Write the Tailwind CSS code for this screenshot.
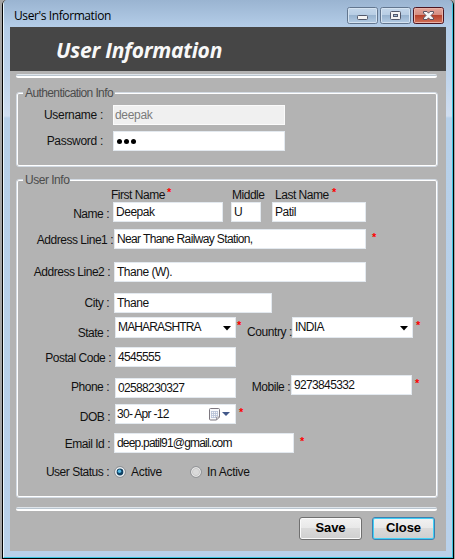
<!DOCTYPE html>
<html lang="en">
<head>
<meta charset="utf-8">
<title>User's Information</title>
<script src="https://cdn.jsdelivr.net/npm/@tailwindcss/browser@4"></script>
</head>
<body class="w-[455px] h-[559px] overflow-hidden bg-[#a5a5a5] pl-[2px] pr-px font-['Liberation_Sans',Arial,sans-serif] text-[12px] leading-[14px] tracking-[-0.48px] text-[#111]">
<div class="h-[559px] border-x border-b border-black rounded-t-[5px] overflow-hidden">
<div class="h-[558px] border-l border-r border-b border-l-[#e9f6fd] border-r-[#3cc4e0] border-b-[#3cc4e0] bg-[linear-gradient(180deg,#9ab4d1_0,#b4cde8_27px,#bdd3eb_70px,#d0def0_116px,#b7d0e9_118px,#b9d1ea_100%)] pl-[6px] pr-[6px]">
  <header class="h-[27px] flex items-start justify-between">
    <h1 class="pl-[4px] pt-[8px] font-['Open_Sans',sans-serif] text-[12px] leading-[16px] tracking-[-0.4px] text-black">User's Information</h1>
    <div class="flex gap-[2px] pt-[7px] pr-[2px]">
      <svg width="31" height="17" viewBox="0 0 31 17"><defs><linearGradient id="b" x2="0" y2="1"><stop offset="0" stop-color="#c5d8eb"/><stop offset=".48" stop-color="#b7cde4"/><stop offset=".5" stop-color="#98b3cf"/><stop offset="1" stop-color="#b5cde5"/></linearGradient><linearGradient id="r" x2="0" y2="1"><stop offset="0" stop-color="#e5a89d"/><stop offset=".47" stop-color="#d48c80"/><stop offset=".5" stop-color="#b7422c"/><stop offset="1" stop-color="#d3745b"/></linearGradient></defs><rect x=".5" y=".5" width="30" height="16" rx="2" fill="url(#b)" stroke="#62768f"/><rect x="1.5" y="1.5" width="28" height="14" rx="1" fill="none" stroke="#d5e3f1"/><rect x="10.500" y="8.500" width="10" height="4" rx="1" fill="#f4f4f4" stroke="#53596b"/></svg>
      <svg width="31" height="17" viewBox="0 0 31 17"><rect x=".5" y=".5" width="30" height="16" rx="2" fill="url(#b)" stroke="#62768f"/><rect x="1.5" y="1.5" width="28" height="14" rx="1" fill="none" stroke="#d5e3f1"/><rect x="10.500" y="4.500" width="10" height="8" rx="1" fill="#f4f4f4" stroke="#53596b"/><rect x="13.500" y="7.500" width="4" height="2" fill="#9fb9d6" stroke="#53596b"/></svg>
      <svg width="31" height="17" viewBox="0 0 31 17"><rect x=".5" y=".5" width="30" height="16" rx="2" fill="url(#r)" stroke="#4b1521"/><rect x="1.500" y="1.500" width="28" height="14" rx="1" fill="none" stroke="#e9b2a7"/><path d="M10.500 4.500h3.500l1.500 1.700 1.500-1.700h3.500v1.500l-2.500 2.500 2.500 2.500v1.500h-3.500l-1.500-1.700-1.500 1.700h-3.500v-1.500l2.500-2.500-2.500-2.500z" fill="#f6f6f6" stroke="#5b5361"/></svg>
    </div>
  </header>
  <main class="h-[524px] bg-[#b3b3b3]">
    <div class="h-[44px] bg-[#464646] pl-[46px] pt-[9px] font-['Open_Sans',sans-serif] font-bold italic text-[21px] leading-[28px] tracking-[-0.25px] text-[#f8f8f8]"><h2>User Information</h2></div>
    <div class="mt-[3px] ml-[6px] mr-[9px] h-[4px] border-t border-b-2 border-t-[#dfe5eb] border-b-white bg-[#b9c5cf] rounded-[2px]"></div>

    <section class="relative mt-[14px] ml-[6px] mr-[8px] h-[75px] rounded-[3px] border border-[#d3dbe4]">
      <div class="h-[73px] rounded-[2px] border border-white pt-[11px]">
        <div class="flex h-[26px]">
          <label class="w-[85px] pt-[3px] text-right tracking-[-0.3px]">Username :</label>
          <div class="ml-[10px] w-[172px] h-[20px] bg-[#f0f0f0] border border-[#fbfbfb] px-px pt-[2px] text-[#7b7b7b] tracking-[-0.3px]">deepak</div>
        </div>
        <div class="flex">
          <label class="w-[85px] pt-[3px] text-right tracking-[-0.3px]">Password :</label>
          <div class="ml-[10px] w-[172px] h-[20px] bg-white border border-[#e3e9ef] pl-[3px] pt-[7px] flex gap-[2px]"><i class="size-[5px] rounded-full bg-black"></i><i class="size-[5px] rounded-full bg-black"></i><i class="size-[5px] rounded-full bg-black"></i></div>
        </div>
      </div>
      <h3 class="absolute left-[6px] top-[-7px] w-[92px] pl-[2px] bg-[#b3b3b3] text-[#4c4c4c] whitespace-nowrap tracking-[-0.6px]">Authentication Info</h3>
    </section>

    <section class="relative mt-[12px] ml-[6px] mr-[8px] h-[319px] rounded-[3px] border border-[#d3dbe4]">
      <div class="h-[317px] rounded-[2px] border border-white pt-[7px]">
        <div class="flex h-[14px] pl-[93px]">
          <span class="w-[56px]">First Name</span><span class="w-[65px] -mt-[3px] text-[#f00] text-[11px] font-bold">*</span><span class="w-[43px]">Middle</span><span class="w-[57px]">Last Name</span><span class="-mt-[3px] text-[#f00] text-[11px] font-bold">*</span>
        </div>
        <div class="flex h-[27px]">
          <label class="w-[91px] pt-[5px] text-right">Name :</label>
          <div class="ml-[4px] w-[110px] h-[20px] bg-white border border-[#e3e9ef] pl-[2px] pt-[2px]">Deepak</div>
          <div class="ml-[8px] w-[30px] h-[20px] bg-white border border-[#e3e9ef] pl-[2px] pt-[2px]">U</div>
          <div class="ml-[11px] w-[94px] h-[20px] bg-white border border-[#e3e9ef] pl-[2px] pt-[2px]">Patil</div>
        </div>
        <div class="flex h-[33px]">
          <label class="w-[95px] pt-[4px] text-right">Address Line1 :</label>
          <div class="ml-px w-[252px] h-[20px] bg-white border border-[#e3e9ef] pl-[2px] pt-[2px] tracking-[-0.63px]">Near Thane Railway Station,</div>
          <span class="ml-[6px] pt-px text-[#f00] text-[11px] font-bold">*</span>
        </div>
        <div class="flex h-[31px]">
          <label class="w-[92px] pt-[3px] text-right">Address Line2 :</label>
          <div class="ml-[4px] w-[252px] h-[20px] bg-white border border-[#e3e9ef] pl-[2px] pt-[2px]">Thane (W).</div>
        </div>
        <div class="flex h-[24px]">
          <label class="w-[91px] pt-[3px] text-right">City :</label>
          <div class="ml-[5px] w-[158px] h-[20px] bg-white border border-[#e3e9ef] pl-[2px] pt-[2px]">Thane</div>
        </div>
        <div class="flex h-[30px]">
          <label class="w-[91px] pt-[9px] text-right">State :</label>
          <div class="ml-[6px] w-[121px] h-[21px] bg-white border border-[#e3e9ef] pl-[2px] pr-[4px] pt-[2px] flex justify-between"><span class="tracking-[-0.85px]">MAHARASHTRA</span><svg class="mt-[6px]" width="8" height="5"><path d="M0 0h8L4 4.500z"/></svg></div>
          <span class="w-[56px] pl-px flex"><span class="w-[4px] pt-px text-[#f00] text-[11px] font-bold">*</span><label class="pl-[6px] pt-[8px] whitespace-nowrap tracking-[-0.4px]">Country :</label></span>
          <div class="w-[121px] h-[21px] bg-white border border-[#e3e9ef] pl-[2px] pr-[4px] pt-[2px] flex justify-between"><span class="tracking-[-0.6px]">INDIA</span><svg class="mt-[6px]" width="8" height="5"><path d="M0 0h8L4 4.500z"/></svg></div>
          <span class="pl-[3px] pt-px text-[#f00] text-[11px] font-bold">*</span>
        </div>
        <div class="flex h-[28px]">
          <label class="w-[93px] pt-[4px] text-right">Postal Code :</label>
          <div class="ml-[4px] w-[121px] h-[20px] bg-white border border-[#e3e9ef] pl-[2px] pt-[2px] tracking-[-0.65px]">4545555</div>
        </div>
        <div class="flex h-[29px]">
          <label class="w-[91px] pt-[5px] text-right">Phone :</label>
          <div class="ml-[6px] mt-[3px] w-[121px] h-[20px] bg-white border border-[#e3e9ef] pl-[2px] pt-[2px] tracking-[-0.65px]">02588230327</div>
          <label class="w-[54px] pt-[5px] text-right">Mobile :</label>
          <div class="ml-px w-[121px] h-[20px] bg-white border border-[#e3e9ef] pl-[2px] pt-[2px] tracking-[-0.65px]">9273845332</div>
          <span class="pl-[3px] pt-px text-[#f00] text-[11px] font-bold">*</span>
        </div>
        <div class="flex h-[29px]">
          <label class="w-[92px] pt-[6px] text-right">DOB :</label>
          <div class="ml-[5px] w-[121px] h-[20px] bg-white border border-[#e3e9ef] pl-px pr-[5px] pt-[2px] flex justify-between"><span class="tracking-[-0.7px]">30- Apr -12</span>
            <svg class="mt-px" width="21" height="13" viewBox="0 0 21 13"><path d="M1.500.5h8a1 1 0 0 1 1 1v7.500l-3 3h-6a1 1 0 0 1-1-1v-9.500a1 1 0 0 1 1-1z" fill="#f8f8fb" stroke="#7d7880"/><path d="M7.500 12v-3h3" fill="none" stroke="#8d8a94" stroke-width=".8"/><path d="M2 3.500h7M2 5.500h7M2 7.500h7M2 9.500h5M2.500 3v7M4.500 3v7M6.500 3v7M8.500 3v5" stroke="#b5bfd6" stroke-width=".8"/><path d="M13 4h8l-4 4z" fill="#42598a"/></svg></div>
          <span class="pl-[3px] pt-px text-[#f00] text-[11px] font-bold">*</span>
        </div>
        <div class="flex h-[31px]">
          <label class="w-[92px] pt-[4px] text-right">Email Id :</label>
          <div class="ml-[4px] w-[180px] h-[20px] bg-white border border-[#e3e9ef] pl-[2px] pt-[2px] tracking-[-0.8px]">deep.patil91@gmail.com</div>
          <span class="ml-[6px] pt-px text-[#f00] text-[11px] font-bold">*</span>
        </div>
        <div class="flex">
          <label class="w-[91px] pt-px text-right">User Status :</label>
          <svg class="ml-[5px] mt-[2px]" width="12" height="12"><circle cx="6" cy="6" r="5.400" fill="#f2f4f5" stroke="#85898e"/><circle cx="6" cy="6" r="3.400" fill="#124264"/><circle cx="5.500" cy="5.300" r="1.700" fill="#58bde9"/></svg>
          <span class="w-[59px] pl-[5px] pt-px tracking-[-0.3px]">Active</span>
          <svg class="ml-[5px] mt-[2px]" width="12" height="12"><circle cx="6" cy="6" r="5.400" fill="#eee" stroke="#8b8d90"/><circle cx="6" cy="6" r="3.600" fill="#dadada" stroke="#c4c4c4" stroke-width=".8"/></svg>
          <span class="pl-[5px] pt-px tracking-[-0.3px]">In Active</span>
        </div>
      </div>
      <h3 class="absolute left-[6px] top-[-7px] w-[47px] pl-[2px] bg-[#b3b3b3] text-[#4c4c4c] whitespace-nowrap">User Info</h3>
    </section>

    <div class="mt-[9px] ml-[6px] mr-[9px] h-[4px] border-t border-b-2 border-t-[#dfe5eb] border-b-white bg-[#b9c5cf] rounded-[2px]"></div>
    <footer class="flex justify-end gap-[10px] mt-[6px] pr-[11px] font-bold text-[13px] leading-[14px] tracking-[-0.1px] text-black">
      <button class="w-[63px] h-[23px] pb-px rounded-[3px] border border-[#707070] shadow-[inset_0_0_0_1px_#fafafa] bg-[linear-gradient(#f2f2f2,#e8e8e8_48%,#dadada_50%,#cfcfcf)]">Save</button>
      <button class="w-[63px] h-[23px] pb-px rounded-[3px] border border-[#3c7fb1] shadow-[inset_0_0_0_1px_#42d0f5] bg-[linear-gradient(#f2f2f2,#e8e8e8_48%,#dadada_50%,#cfcfcf)]">Close</button>
    </footer>
  </main>
</div>
</div>
</body>
</html>
